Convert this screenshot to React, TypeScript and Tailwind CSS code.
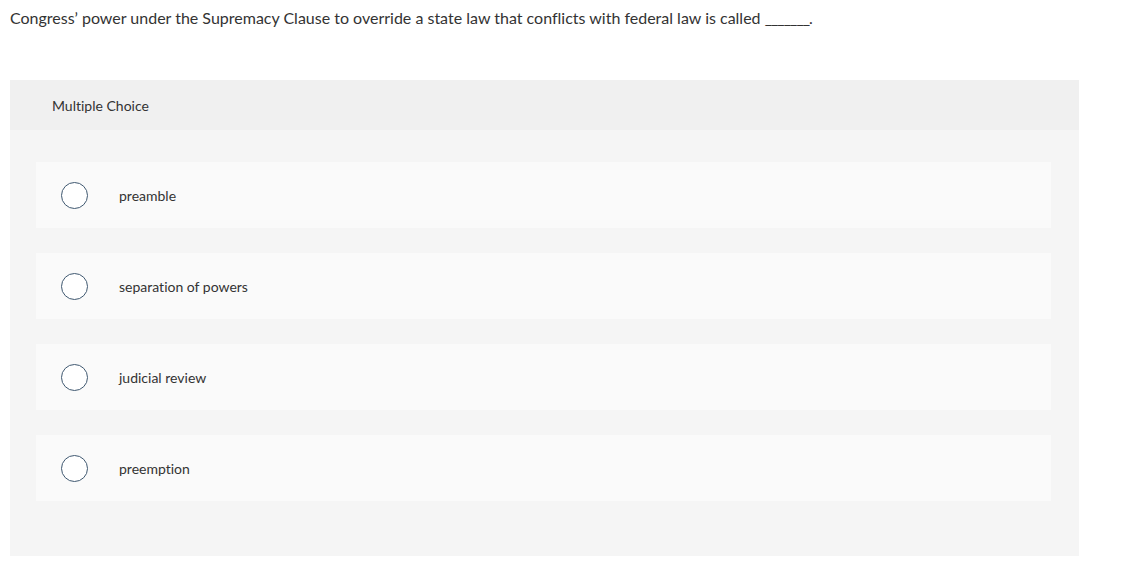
import React from 'react';

const choices = ['preamble', 'separation of powers', 'judicial review', 'preemption'];

function Radio() {
  return (
    <span className="block w-[27px] h-[27px] rounded-full border-[1.5px] border-[#3f5870] bg-white shrink-0" />
  );
}

export default function App() {
  return (
    <div
      className="min-h-[565px] bg-white text-[#333333] [font-variant-ligatures:none]"
      style={{ fontFamily: 'Lato, "Open Sans", sans-serif' }}
    >
      {/* Question prompt */}
      <p className="pl-[10px] pt-[6px] text-[16px] leading-[24px]">
        Congress’ power under the Supremacy Clause to override a state law that conflicts with federal law is called{' '}
        <span className="tracking-[-1px]">_______</span>.
      </p>

      {/* Answer panel */}
      <section className="ml-[10px] mt-[50px] w-[1069px] bg-[#f5f5f5]">
        <div className="h-[50px] flex items-center pl-[42px] bg-[#f0f0f0] text-[14px]">
          Multiple Choice
        </div>
        <div className="flex flex-col gap-[25px] pl-[26px] pr-[28px] pt-[32px] pb-[55px]">
          {choices.map((c) => (
            <label key={c} className="h-[66px] flex items-center gap-[31px] pl-[25px] bg-[#fafafa] text-[14px] cursor-pointer">
              <Radio />
              <span>{c}</span>
            </label>
          ))}
        </div>
      </section>
    </div>
  );
}
